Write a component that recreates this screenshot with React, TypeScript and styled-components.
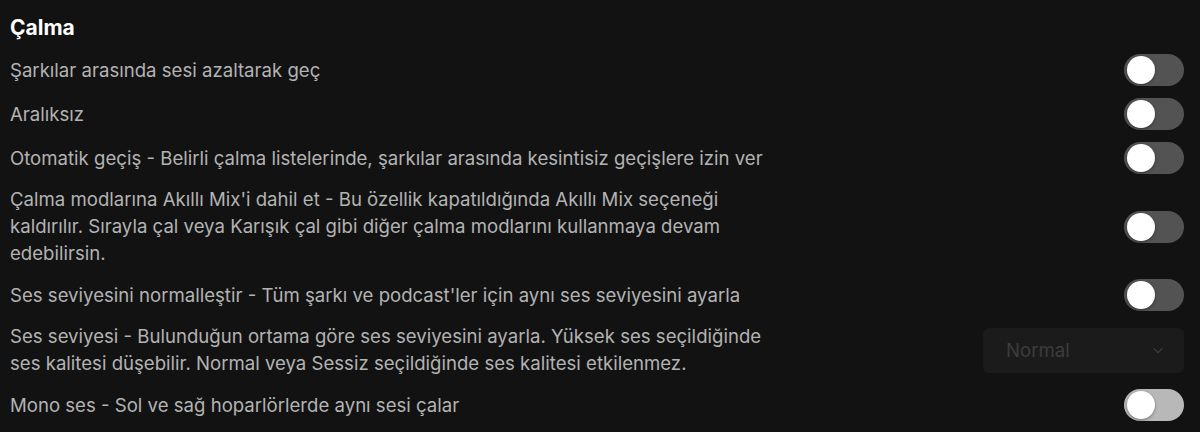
import React from "react";
import styled, { createGlobalStyle } from "styled-components";

const Global = createGlobalStyle`
  html, body { margin: 0; padding: 0; background: #121212; }
  body { font-family: "Inter", "Noto Sans", sans-serif; }
`;

const Page = styled.div`
  background: #121212;
  width: 1200px;
  height: 432px;
  box-sizing: border-box;
  padding: 12px 16px 0 10px;
  overflow: hidden;
`;

const Heading = styled.h2`
  margin: 0 0 4px;
  color: #ffffff;
  font-size: 21px;
  font-weight: 700;
  line-height: 32px;
`;

const Row = styled.div`
  display: flex;
  align-items: center;
  justify-content: space-between;
  padding: 6px 0;
  min-height: 32px;
`;

const Label = styled.div`
  color: #b3b3b3;
  font-size: 18.6px;
  line-height: 27px;
  max-width: 765px;
`;

const Track = styled.button<{ $light?: boolean }>`
  position: relative;
  width: 60px;
  height: 32px;
  border-radius: 16px;
  border: none;
  padding: 0;
  flex: none;
  background: ${(p) => (p.$light ? "#b8b8b8" : "#535353")};
  cursor: pointer;
`;

const Knob = styled.span`
  position: absolute;
  top: 2px;
  left: 3px;
  width: 28px;
  height: 28px;
  border-radius: 50%;
  background: #ffffff;
  box-shadow: 0 1px 3px rgba(0, 0, 0, 0.4);
`;

const Select = styled.div`
  width: 201px;
  height: 45px;
  box-sizing: border-box;
  border-radius: 6px;
  background: #1b1b1b;
  display: flex;
  align-items: center;
  justify-content: space-between;
  padding: 0 19px 0 23px;
  color: #3c3c3c;
  font-size: 18.6px;
  flex: none;
`;

const Toggle = ({ light }: { light?: boolean }) => (
  <Track $light={light} aria-label="toggle">
    <Knob />
  </Track>
);

export default function App() {
  return (
    <>
      <Global />
      <Page>
        <Heading>Çalma</Heading>
        <Row>
          <Label>Şarkılar arasında sesi azaltarak geç</Label>
          <Toggle />
        </Row>
        <Row>
          <Label>Aralıksız</Label>
          <Toggle />
        </Row>
        <Row>
          <Label>
            Otomatik geçiş - Belirli çalma listelerinde, şarkılar arasında kesintisiz geçişlere izin ver
          </Label>
          <Toggle />
        </Row>
        <Row>
          <Label>
            Çalma modlarına Akıllı Mix'i dahil et - Bu özellik kapatıldığında Akıllı Mix seçeneği
            kaldırılır. Sırayla çal veya Karışık çal gibi diğer çalma modlarını kullanmaya devam
            edebilirsin.
          </Label>
          <Toggle />
        </Row>
        <Row>
          <Label>Ses seviyesini normalleştir - Tüm şarkı ve podcast'ler için aynı ses seviyesini ayarla</Label>
          <Toggle />
        </Row>
        <Row>
          <Label>
            Ses seviyesi - Bulunduğun ortama göre ses seviyesini ayarla. Yüksek ses seçildiğinde ses
            kalitesi düşebilir. Normal veya Sessiz seçildiğinde ses kalitesi etkilenmez.
          </Label>
          <Select>
            <span>Normal</span>
            <svg width="14" height="14" viewBox="0 0 16 16" fill="none" stroke="#3c3c3c" strokeWidth="1.4">
              <path d="M3 6l5 5 5-5" />
            </svg>
          </Select>
        </Row>
        <Row>
          <Label>Mono ses - Sol ve sağ hoparlörlerde aynı sesi çalar</Label>
          <Toggle light />
        </Row>
      </Page>
    </>
  );
}
